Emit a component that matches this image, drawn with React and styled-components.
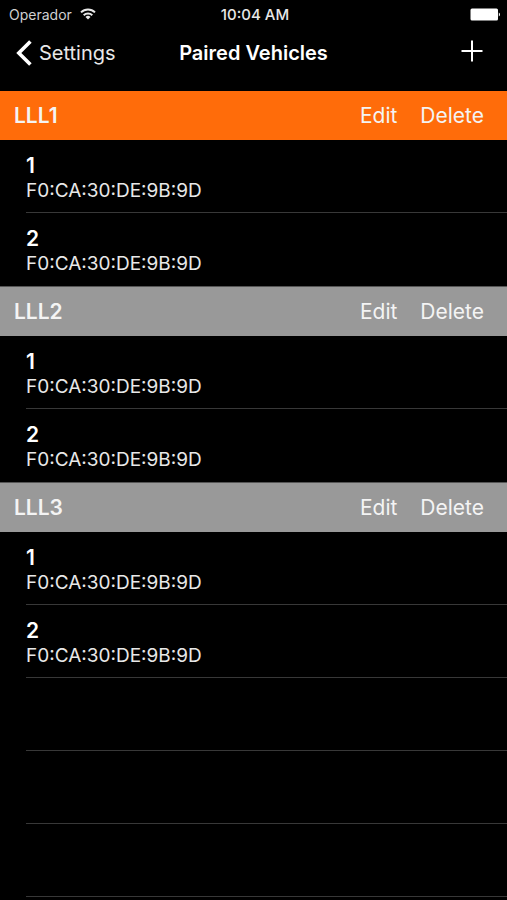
import React from "react";
import styled, { createGlobalStyle } from "styled-components";

const GlobalStyle = createGlobalStyle`
  * {
    box-sizing: border-box;
  }
  body {
    margin: 0;
    background: #000;
    color: #fff;
    font-family: Inter, "Liberation Sans", sans-serif;
    overflow: hidden;
  }
`;

const Screen = styled.div`
  min-height: 100vh;
  background: #000;
`;

const StatusBar = styled.div`
  display: grid;
  grid-template-columns: 1fr auto 1fr;
  align-items: center;
  height: 28px;
  padding: 0 6px 0 9px;
  font-size: 14px;
`;

const Carrier = styled.div`
  display: flex;
  align-items: center;
  gap: 8px;
  color: #d0d0d0;
`;

const Clock = styled.time`
  font-size: 15px;
  font-weight: 500;
  color: #e8e8e8;
`;

const BatteryIcon = styled.svg`
  justify-self: end;
`;

const NavBar = styled.header`
  display: grid;
  grid-template-columns: 1fr auto 1fr;
  align-items: center;
  height: 63px;
  padding: 0 16px 14px;
`;

const BackLink = styled.a`
  display: flex;
  align-items: center;
  gap: 7px;
  color: #e8e8e8;
  font-size: 20px;
  text-decoration: none;
`;

const Title = styled.h1`
  margin: 0;
  font-size: 20px;
  font-weight: 600;
`;

const AddButton = styled.button`
  justify-self: end;
  display: flex;
  padding: 0 8px 4px;
  border: 0;
  background: none;
  color: #fff;
  cursor: pointer;
`;

const Group = styled.section`
  & + & {
    border-top: 1px solid #555;
  }
`;

const GroupHeader = styled.div`
  display: flex;
  align-items: center;
  gap: 23px;
  height: 49px;
  padding: 0 23px 0 14px;
  background: ${({ $active }) => ($active ? "#ff6c0a" : "#999")};
`;

const GroupName = styled.h2`
  flex: 1;
  margin: 0;
  font-size: 21px;
  font-weight: 600;
  color: #f4f4f4;
`;

const GroupAction = styled.button`
  padding: 0;
  border: 0;
  background: none;
  color: #f4f4f4;
  font-family: inherit;
  font-size: 21px;
  cursor: pointer;
`;

const List = styled.ul`
  margin: 0;
  padding: 0 0 0 26px;
  list-style: none;
`;

const Row = styled.li`
  height: 73px;
  padding-top: 13px;
  border-bottom: 1px solid ${({ $plain }) => ($plain ? "transparent" : "#383838")};
`;

const DeviceName = styled.div`
  font-size: 21px;
  font-weight: 600;
  line-height: 26px;
`;

const DeviceAddress = styled.div`
  color: #e8e8e8;
  font-size: 19px;
  line-height: 24px;
`;

const devices = [
  { name: "1", address: "F0:CA:30:DE:9B:9D" },
  { name: "2", address: "F0:CA:30:DE:9B:9D" },
];

const vehicles = [
  { name: "LLL1", active: true, devices },
  { name: "LLL2", active: false, devices },
  { name: "LLL3", active: false, devices },
];

const emptyRows = [0, 1, 2];

const Wifi = () => (
  <svg width="16" height="12" viewBox="0 0 16 12" fill="none" stroke="#e8e8e8" strokeWidth="2" aria-hidden="true">
    <path d="M1 4.4a10 10 0 0 1 14 0" />
    <path d="M3.7 7.2a6.1 6.1 0 0 1 8.6 0" />
    <path d="M8 11.6 5.5 9.1a3.5 3.5 0 0 1 5 0z" fill="#e8e8e8" stroke="none" />
  </svg>
);

const Battery = () => (
  <BatteryIcon width="31" height="13" viewBox="0 0 31 13" fill="#fff" aria-hidden="true">
    <rect x="0.5" y="0.5" width="27.5" height="12" rx="1.5" />
    <path d="M28.8 4.5c1.6.6 1.6 3.4 0 4z" />
  </BatteryIcon>
);

const VehicleGroup = ({ vehicle, last }) => (
  <Group>
    <GroupHeader $active={vehicle.active}>
      <GroupName>{vehicle.name}</GroupName>
      <GroupAction type="button">Edit</GroupAction>
      <GroupAction type="button">Delete</GroupAction>
    </GroupHeader>
    <List>
      {vehicle.devices.map((device, i) => (
        <Row key={device.name} $plain={!last && i === vehicle.devices.length - 1}>
          <DeviceName>{device.name}</DeviceName>
          <DeviceAddress>{device.address}</DeviceAddress>
        </Row>
      ))}
    </List>
  </Group>
);

const App = () => {
  return (
    <Screen>
      <GlobalStyle />
      <StatusBar>
        <Carrier>
          Operador
          <Wifi />
        </Carrier>
        <Clock>10:04 AM</Clock>
        <Battery />
      </StatusBar>
      <NavBar>
        <BackLink href="#settings">
          <svg width="16" height="26" viewBox="0 0 16 26" fill="none" stroke="#fff" strokeWidth="3.6" aria-hidden="true">
            <path d="M14.4 1.4 2.8 13l11.6 11.6" />
          </svg>
          Settings
        </BackLink>
        <Title>Paired Vehicles</Title>
        <AddButton type="button" aria-label="Add vehicle">
          <svg width="22" height="22" viewBox="0 0 22 22" fill="none" stroke="currentColor" strokeWidth="2" aria-hidden="true">
            <path d="M11 0.5v21M0.5 11h21" />
          </svg>
        </AddButton>
      </NavBar>
      <main>
        {vehicles.map((vehicle, i) => (
          <VehicleGroup key={vehicle.name} vehicle={vehicle} last={i === vehicles.length - 1} />
        ))}
        <List aria-hidden="true">
          {emptyRows.map((row) => (
            <Row key={row} />
          ))}
        </List>
      </main>
    </Screen>
  );
};

export default App;
